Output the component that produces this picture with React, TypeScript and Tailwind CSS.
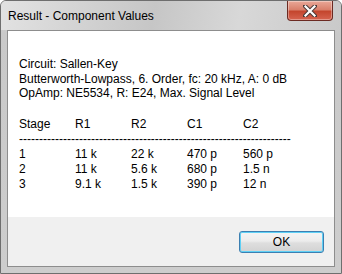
import React from "react";

const rows = [
  ["1", "11 k", "22 k", "470 p", "560 p"],
  ["2", "11 k", "5.6 k", "680 p", "1.5 n"],
  ["3", "9.1 k", "1.5 k", "390 p", "12 n"],
];

function CloseButton() {
  return (
    <div className="absolute right-[8px] top-0 h-[20px] w-[46px] rounded-b-[4px] border border-t-0 border-[#6b2a22] bg-[linear-gradient(to_bottom,#e9a898_0%,#d9806c_45%,#c4462e_55%,#d66450_100%)] flex items-center justify-center shadow-[inset_0_0_0_1px_rgba(255,255,255,0.35)]">
      <svg width="14" height="12" viewBox="0 0 14 12">
        <path d="M2 1 L12 11 M12 1 L2 11" stroke="#4a3a38" strokeWidth="4.2" strokeLinecap="square" />
        <path d="M2.5 1.5 L11.5 10.5 M11.5 1.5 L2.5 10.5" stroke="#ffffff" strokeWidth="2.2" strokeLinecap="square" />
      </svg>
    </div>
  );
}

export default function App() {
  return (
    <div className="relative w-[342px] h-[274px] overflow-hidden rounded-t-[6px] border border-[#6e6e6e] bg-[linear-gradient(to_bottom,#d6d6d6_0%,#c9c9c9_12%,#cdcdcd_100%)] font-['Liberation_Sans',sans-serif]">
      {/* title bar */}
      <div className="h-[29px] flex items-center pl-[7px] text-[12px] text-black bg-[linear-gradient(100deg,#e2e2e2_0%,#cfcfcf_30%,#c6c6c6_45%,#d8d8d8_70%,#c9c9c9_100%)]">
        Result - Component Values
      </div>
      <CloseButton />

      {/* client */}
      <div className="mx-[6px] h-[237px] border border-[#8d8d8d] flex flex-col text-[12px] text-black">
        <div className="flex-1 bg-white px-[11px] pt-[26px] leading-[14.5px]">
          <div>Circuit: Sallen-Key</div>
          <div>Butterworth-Lowpass, 6. Order, fc: 20 kHz, A: 0 dB</div>
          <div>OpAmp: NE5534, R: E24, Max. Signal Level</div>

          <div className="mt-[16px] grid grid-cols-[56px_56px_56px_56px_56px] leading-[15px]">
            <div>Stage</div>
            <div>R1</div>
            <div>R2</div>
            <div>C1</div>
            <div>C2</div>
          </div>
          <div className="whitespace-nowrap leading-[15px]">
            {"-".repeat(68)}
          </div>
          <div className="leading-[15px]">
            {rows.map((r) => (
              <div key={r[0]} className="grid grid-cols-[56px_56px_56px_56px_56px]">
                {r.map((c, i) => (
                  <div key={i}>{c}</div>
                ))}
              </div>
            ))}
          </div>
        </div>
        <div className="h-[49px] bg-[#f0f0f0] flex items-start justify-end pt-[14px] pr-[10px]">
          <button className="w-[85px] h-[22px] rounded-[3px] border border-[#3c7fb1] bg-[linear-gradient(to_bottom,#f4f4f4_0%,#ececec_45%,#dedede_55%,#d2d2d2_100%)] shadow-[inset_0_0_0_1px_#5fd0f5] text-[12px] text-black">
            OK
          </button>
        </div>
      </div>
    </div>
  );
}
